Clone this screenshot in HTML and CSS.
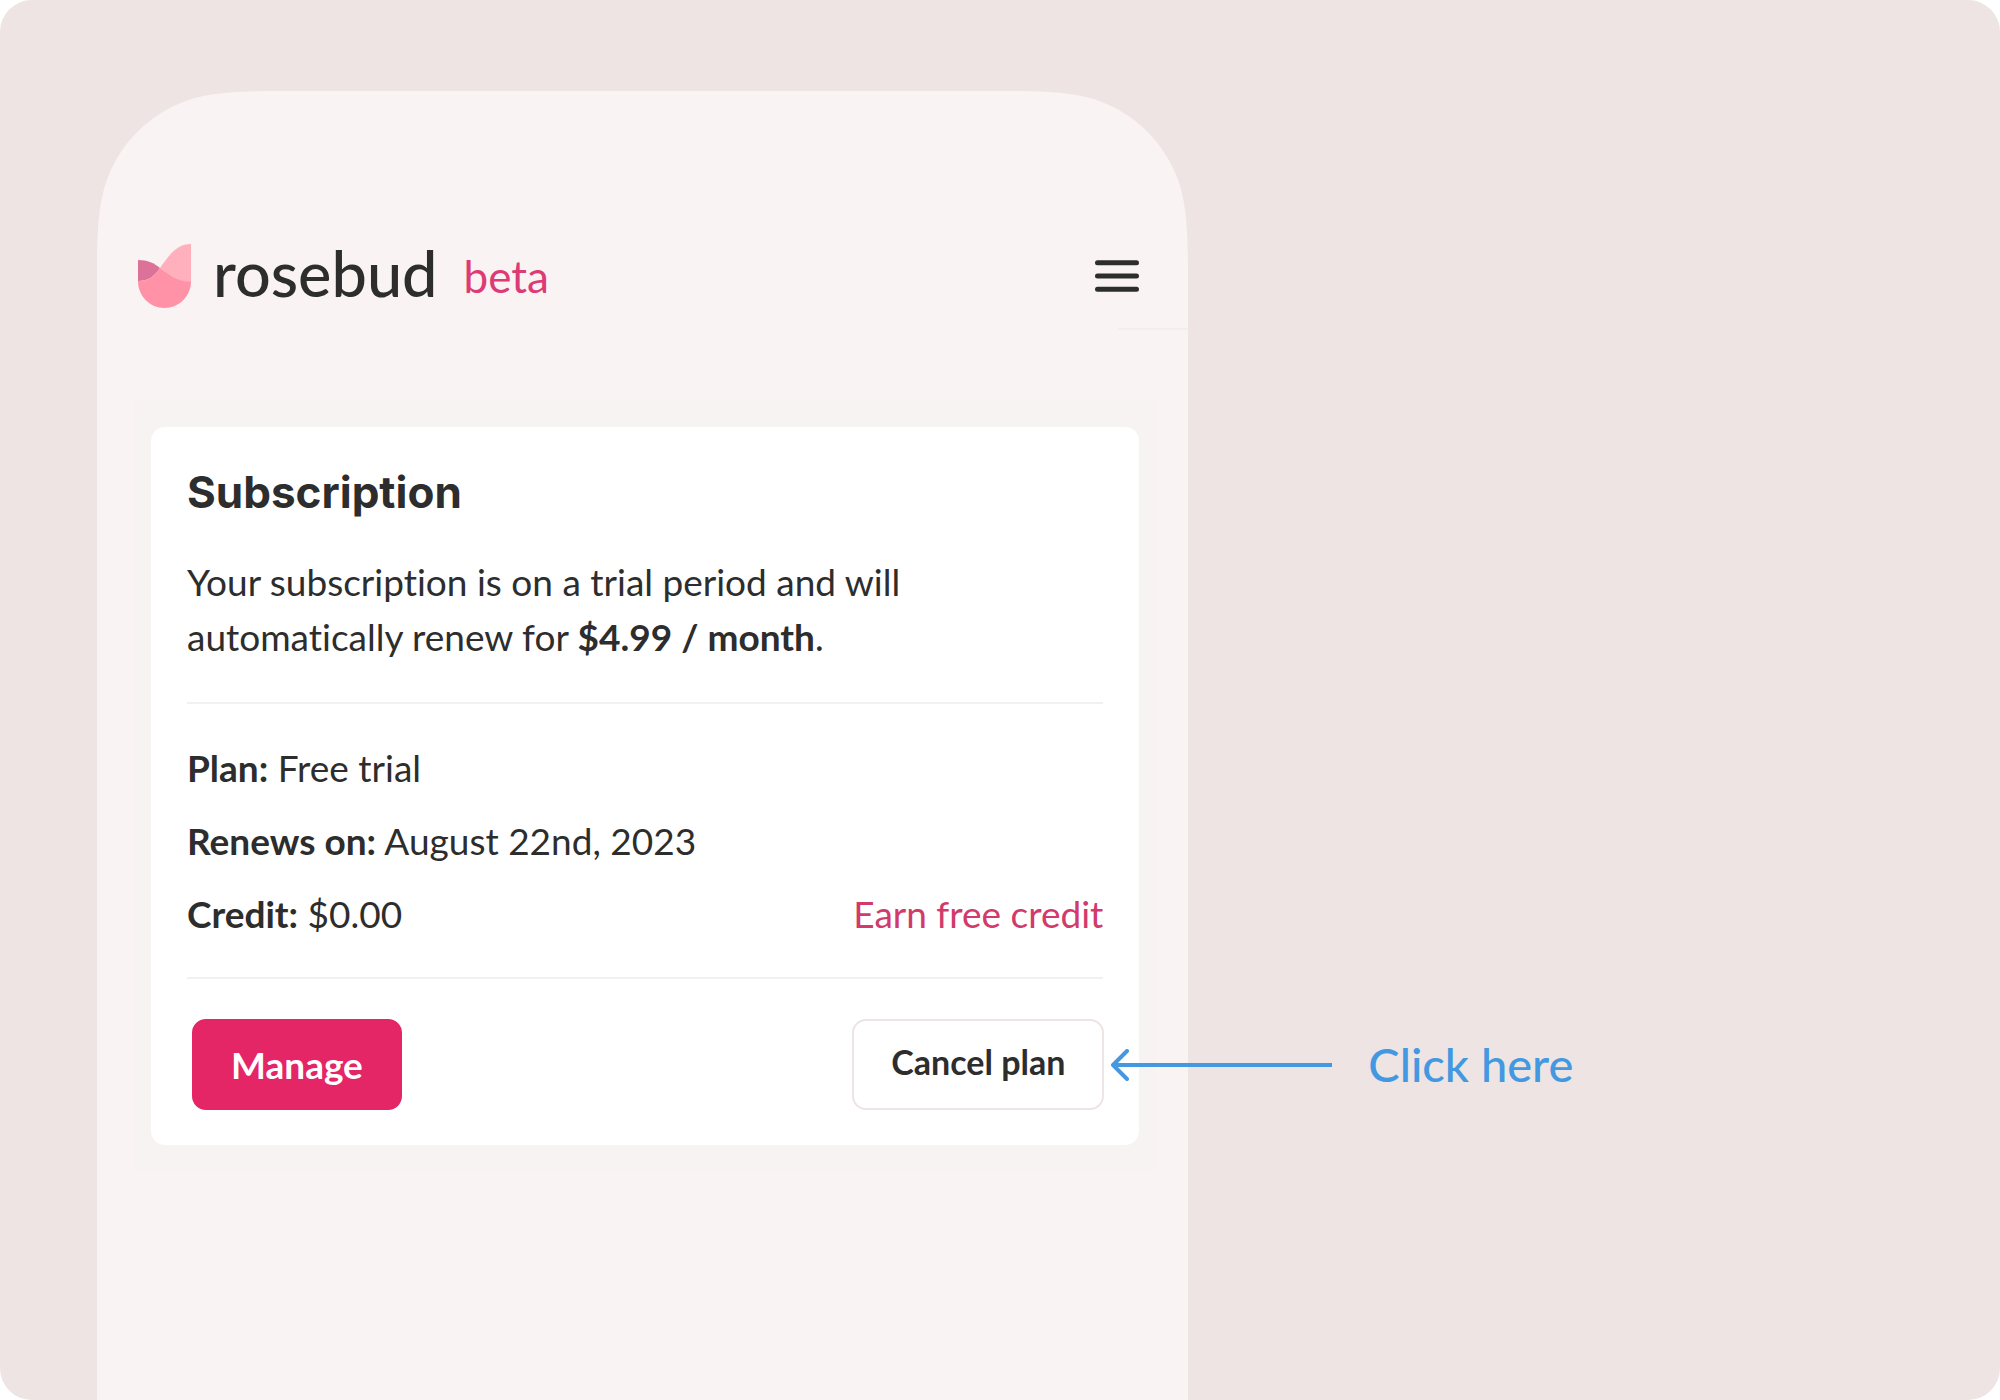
FILE: index.html
```html
<!DOCTYPE html>
<html lang="en">
<head>
  <meta charset="UTF-8" />
  <title>Rosebud - Subscription</title>
  <link rel="stylesheet" href="styles.css">
</head>
<body>
  <div class="canvas">
    <div class="phone">
      <!-- Smooth phone corners -->
      <svg class="corner corner-left" viewBox="0 0 180 180" aria-hidden="true">
        <path d="M0 0V180C0 130 3 107 11 86C25 51 51 25 86 11C107 3 130 0 180 0Z" />
      </svg>
      <svg class="corner corner-right" viewBox="0 0 180 180" aria-hidden="true">
        <path d="M0 0V180C0 130 3 107 11 86C25 51 51 25 86 11C107 3 130 0 180 0Z" />
      </svg>

      <!-- Top Bar -->
      <header class="top-bar">
        <div class="brand">
          <svg class="brand-logo" viewBox="0 0 53 64" aria-hidden="true">
            <path fill="#ffb0bc" d="M53 0C39 0 32 10 22 24C31 30 39 38 53 38Z" />
            <path fill="#dd7299" d="M0 16C10 16 16 19 22 24C16 33 10 37 0 37Z" />
            <path fill="#ff92a7" d="M0 37C10 37 16 33 22 24C31 30 39 38 53 37.500C53 52 41 64 26.500 64C12 64 0 52 0 37Z" />
          </svg>
          <span class="brand-name">rosebud</span>
          <span class="brand-tag">beta</span>
        </div>
        <button class="menu-btn" type="button" aria-label="Menu">
          <svg viewBox="0 0 44 32" aria-hidden="true">
            <path d="M2.500 2.700H41.500M2.500 16H41.500M2.500 29.300H41.500" />
          </svg>
        </button>
      </header>
      <div class="top-line"></div>

      <!-- Subscription Card -->
      <main class="card-frame">
        <section class="card">
          <h1>Subscription</h1>
          <p class="intro">Your subscription is on a trial period and will<br>automatically renew for <strong>$4.99 / month</strong>.</p>

          <div class="details">
            <div class="row"><span><strong>Plan:</strong> Free trial</span></div>
            <div class="row"><span><strong>Renews on:</strong> August 22nd, 2023</span></div>
            <div class="row">
              <span><strong>Credit:</strong> $0.00</span>
              <a class="earn-link" href="#">Earn free credit</a>
            </div>
          </div>

          <div class="actions">
            <button class="btn manage-btn" type="button">Manage</button>
            <div class="cancel">
              <button class="btn cancel-btn" type="button">Cancel plan</button>
              <!-- Callout over the screen edge -->
              <div class="callout">
                <svg viewBox="0 0 222 32" aria-hidden="true">
                  <path d="M222 16H4M17 2L3 16L17 30" />
                </svg>
                <span>Click here</span>
              </div>
            </div>
          </div>
        </section>
      </main>
    </div>
  </div>
</body>
</html>
```
FILE: styles.css
```css
* {
  margin: 0;
  padding: 0;
  box-sizing: border-box;
}

body {
  font-family: Lato, "Open Sans", sans-serif;
  font-size: 37px;
  font-variant-ligatures: none;
  line-height: 55px;
  background-color: #fff;
  color: #2d2d2d;
}

button {
  font-family: inherit;
  cursor: pointer;
}

.canvas {
  display: flex;
  min-height: 100vh;
  padding: 91px 0 0 97px;
  background-color: #ede4e3;
  border-radius: 32px;
  overflow: hidden;
}

/* Phone */
.phone {
  position: relative;
  width: 57.35%;
  background-color: #f9f3f3;
}

.corner {
  position: absolute;
  top: 0;
  width: 180px;
  height: 180px;
  fill: #ede4e3;
}

.corner-left {
  left: 0;
}

.corner-right {
  right: 0;
  transform: scaleX(-1);
}

/* Top bar */
.top-bar {
  position: relative;
  display: flex;
  justify-content: space-between;
  align-items: center;
  padding: 147px 49px 0 41px;
}

.brand {
  display: flex;
  align-items: center;
}

.brand-logo {
  width: 53px;
  height: 64px;
}

.brand-name {
  margin-left: 22px;
  padding-bottom: 6px;
  font-size: 63px;
  font-weight: 500;
  line-height: 70px;
}

.brand-tag {
  margin-left: 26px;
  font-size: 44px;
  color: #dd3a76;
}

.menu-btn {
  width: 44px;
  height: 32px;
  background: none;
  border: none;
}

.menu-btn svg {
  display: block;
  fill: none;
  stroke: #2d2d2d;
  stroke-width: 5;
  stroke-linecap: round;
}

.top-line {
  width: 70px;
  height: 2px;
  margin: 14px 0 0 auto;
  background-color: #f2eeed;
}

/* Card */
.card-frame {
  margin: 71px 32px 0 37px;
  padding: 26px 17px;
  background-color: #f7f3f2;
}

.card {
  padding: 35px 36px;
  background-color: #fff;
  border-radius: 14px;
}

h1 {
  font-family: Inter, sans-serif;
  font-size: 44px;
  line-height: 60px;
}

.intro {
  margin-top: 32px;
}

.details {
  display: flex;
  flex-direction: column;
  gap: 18px;
  margin-top: 38px;
  padding: 36px 0;
  border-top: 2px solid #f1f1f1;
  border-bottom: 2px solid #f1f1f1;
}

.row {
  display: flex;
  justify-content: space-between;
}

.earn-link {
  color: #d13a6b;
  text-decoration: none;
}

.actions {
  display: flex;
  justify-content: space-between;
  margin: 40px -1px 0 5px;
}

.btn {
  height: 91px;
  padding: 0 37px;
  border: 2px solid #ede4e3;
  border-radius: 14px;
  background-color: #fff;
  color: #2d2d2d;
  font-weight: bold;
}

.manage-btn {
  background-color: #e42566;
  border-color: #e42566;
  color: #fff;
  font-size: 37px;
}

.cancel {
  position: relative;
}

.cancel-btn {
  padding-bottom: 6px;
  font-size: 34px;
}

.callout {
  position: absolute;
  top: 0;
  left: 100%;
  display: flex;
  align-items: center;
  gap: 36px;
  height: 91px;
  margin-left: 6px;
  color: #4299e1;
  font-size: 47px;
  font-weight: 500;
  white-space: nowrap;
}

.callout svg {
  width: 222px;
  height: 32px;
  fill: none;
  stroke: #4299e1;
  stroke-width: 4;
  stroke-linecap: round;
  stroke-linejoin: round;
}
```
